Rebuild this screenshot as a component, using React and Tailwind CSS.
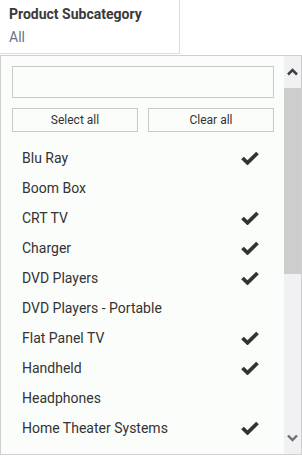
import React from "react";

const items = [
  ["Blu Ray", true],
  ["Boom Box", false],
  ["CRT TV", true],
  ["Charger", true],
  ["DVD Players", true],
  ["DVD Players - Portable", false],
  ["Flat Panel TV", true],
  ["Handheld", true],
  ["Headphones", false],
  ["Home Theater Systems", true],
];

function Check() {
  return (
    <svg width="18" height="14" viewBox="0 0 18 14" className="block">
      <path d="M1.5 7 L6.5 11.8 L16.5 2" fill="none" stroke="#333" strokeWidth="3.8" strokeLinecap="butt" strokeLinejoin="miter" />
    </svg>
  );
}

export default function App() {
  return (
    <div className="w-[302px] h-[459px] bg-white font-['Roboto',sans-serif] overflow-hidden">
      <div className="w-[180px] h-[54px] border-r border-b border-[#dcdcdc] pl-[9px] pt-[5px]">
        <div className="text-[14px] font-bold text-[#3a3a3a] leading-[18px]">Product Subcategory</div>
        <div className="text-[14px] text-[#6b7385] leading-[18px] mt-[5px]">All</div>
      </div>
      <div className="mt-[1px] w-[302px] h-[400px] border border-[#cfcfcf] bg-[#fbfdfb] flex">
        <div className="flex-1 pl-[11px] pr-[10px] pt-[10px] overflow-hidden">
          <div className="h-[32px] border border-[#c9c9c9] bg-[#fbfdfb]" />
          <div className="flex gap-[10px] mt-[10px]">
            <div className="flex-1 h-[24px] border border-[#c9c9c9] flex items-center justify-center text-[12px] text-[#333]">Select all</div>
            <div className="flex-1 h-[24px] border border-[#c9c9c9] flex items-center justify-center text-[12px] text-[#333]">Clear all</div>
          </div>
          <div className="mt-[11px]">
            {items.map(([name, checked]) => (
              <div key={name} className="h-[30px] flex items-center justify-between pl-[10px] pr-[15px] text-[14px] text-[#333]">
                <span>{name}</span>
                {checked ? <Check /> : null}
              </div>
            ))}
          </div>
        </div>
        <div className="w-[17px] bg-[#f1f0f3] flex flex-col">
          <div className="h-[32px] flex items-center justify-center">
            <svg width="11" height="8" viewBox="0 0 11 8"><path d="M1 6.5 L5.5 2 L10 6.5" fill="none" stroke="#404040" strokeWidth="2.6" /></svg>
          </div>
          <div className="h-[186px] bg-[#cdcdcd]" />
          <div className="flex-1" />
          <div className="h-[32px] flex items-center justify-center">
            <svg width="11" height="8" viewBox="0 0 11 8"><path d="M1 1.5 L5.5 6 L10 1.5" fill="none" stroke="#707070" strokeWidth="2.4" /></svg>
          </div>
        </div>
      </div>
    </div>
  );
}
